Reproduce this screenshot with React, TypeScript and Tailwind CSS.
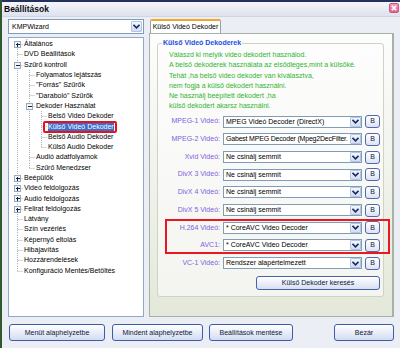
import React from 'react';

type Node = {
  t: string;
  lv: number;
  g: boolean[];
  exp?: '+' | '-';
  last?: boolean;
  first?: boolean;
  sel?: boolean;
};

const tree: Node[] = [
  { t: 'Általános', lv: 0, g: [], exp: '+', first: true },
  { t: 'DVD Beállítások', lv: 0, g: [] },
  { t: 'Szűrő kontroll', lv: 0, g: [], exp: '-' },
  { t: 'Folyamatos lejátszás', lv: 1, g: [true] },
  { t: '"Forrás" Szűrők', lv: 1, g: [true] },
  { t: '"Daraboló" Szűrők', lv: 1, g: [true] },
  { t: 'Dekoder Használat', lv: 1, g: [true], exp: '-' },
  { t: 'Belső Videó Dekoder', lv: 2, g: [true, true] },
  { t: 'Külső Videó Dekoder', lv: 2, g: [true, true], sel: true },
  { t: 'Belső Audio Dekoder', lv: 2, g: [true, true] },
  { t: 'Külső Audió Dekoder', lv: 2, g: [true, true], last: true },
  { t: 'Audió adatfolyamok', lv: 1, g: [true] },
  { t: 'Szűrő Menedzser', lv: 1, g: [true], last: true },
  { t: 'Beépülők', lv: 0, g: [], exp: '+' },
  { t: 'Videó feldolgozás', lv: 0, g: [], exp: '+' },
  { t: 'Audió feldolgozás', lv: 0, g: [], exp: '+' },
  { t: 'Felirat feldolgozás', lv: 0, g: [], exp: '+' },
  { t: 'Látvány', lv: 0, g: [] },
  { t: 'Szín vezérlés', lv: 0, g: [] },
  { t: 'Képernyő eltolás', lv: 0, g: [] },
  { t: 'Hibajavítás', lv: 0, g: [] },
  { t: 'Hozzárendelések', lv: 0, g: [] },
  { t: 'Konfiguráció Mentés/Betöltés', lv: 0, g: [], last: true },
];

const decoders: { label: string; value: string; tight?: boolean }[] = [
  { label: 'MPEG-1 Videó:', value: 'MPEG Videó Decoder (DirectX)' },
  { label: 'MPEG-2 Videó:', value: 'Gabest MPEG Decoder (Mpeg2DecFilter.', tight: true },
  { label: 'Xvid Videó:', value: 'Ne csinálj semmit' },
  { label: 'DivX 3 Videó:', value: 'Ne csinálj semmit' },
  { label: 'DivX 4 Videó:', value: 'Ne csinálj semmit' },
  { label: 'DivX 5 Videó:', value: 'Ne csinálj semmit' },
];

const H = 10.3;

function PassCell({ on }: { on: boolean }) {
  return (
    <svg width={12} height={H} viewBox={`0 0 12 ${H}`} className="shrink-0">
      {on && <line x1={6.5} y1={0} x2={6.5} y2={H} stroke="#b0b0b0" strokeDasharray="1 1" />}
    </svg>
  );
}

function OwnCell({ n }: { n: Node }) {
  const cy = 5.5;
  return (
    <svg width={12} height={H} viewBox={`0 0 12 ${H}`} className="shrink-0">
      <line
        x1={6.5}
        y1={n.first ? cy : 0}
        x2={6.5}
        y2={n.last ? cy : H}
        stroke="#b0b0b0"
        strokeDasharray="1 1"
      />
      <line x1={n.exp ? 9.5 : 6.5} y1={cy} x2={12} y2={cy} stroke="#b0b0b0" strokeDasharray="1 1" />
      {n.exp && (
        <g shapeRendering="crispEdges">
          <rect x={3.5} y={2.5} width={6} height={6} fill="#f4f6fa" stroke="#9aa8bc" />
          <line x1={5} y1={cy} x2={9} y2={cy} stroke="#142448" />
          {n.exp === '+' && <line x1={6.5} y1={4} x2={6.5} y2={8} stroke="#142448" />}
        </g>
      )}
    </svg>
  );
}

function Chevron() {
  return (
    <svg width={7} height={5} viewBox="0 0 7 5">
      <path d="M0.5 0.8 L3.5 3.8 L6.5 0.8" fill="none" stroke="#1b2b5c" strokeWidth={1.6} />
    </svg>
  );
}

function DropBtn() {
  return (
    <div className="flex h-full w-[11px] shrink-0 items-center justify-center rounded-[1px] border border-[#b4c4e6] bg-gradient-to-b from-[#f4f7fe] to-[#d2dcf4]">
      <Chevron />
    </div>
  );
}

function Combo({ value, tight }: { value: string; tight?: boolean }) {
  return (
    <div className="flex h-[12px] w-[139px] shrink-0 items-stretch border border-[#7f9db9] bg-white">
      <span
        className={`flex-1 overflow-hidden whitespace-nowrap pl-[2px] leading-[10px] text-black ${tight ? 'tracking-[-0.2px]' : ''}`}
      >
        {value}
      </span>
      <DropBtn />
    </div>
  );
}

function Btn({ children, w }: { children: React.ReactNode; w: string }) {
  return (
    <button className={`h-[17px] ${w} shrink-0 rounded-[3px] border border-[#3d5ba8] bg-gradient-to-b from-white to-[#d4dcf2] text-[7px] leading-[15px] text-[#0c1a3a]`}>
      {children}
    </button>
  );
}

function DecoderRow({ label, value, tight }: { label: string; value: string; tight?: boolean }) {
  return (
    <div className="flex h-[17.7px] items-center">
      <span className="w-[62px] shrink-0 whitespace-nowrap text-right text-[#7f5fe0]">{label}</span>
      <div className="ml-[3px]">
        <Combo value={value} tight={tight} />
      </div>
      <div className="ml-[3px] flex h-[13px] w-[15px] items-center justify-center rounded-[3px] border border-[#5468a8] bg-gradient-to-b from-white to-[#dce3f4] text-[7px] text-[#10204a]">
        B
      </div>
    </div>
  );
}

export default function App() {
  return (
    <div className="flex h-[348px] w-[400px] flex-col overflow-hidden border-l-2 border-[#2e5a2e] bg-[#eceef5] font-['Liberation_Sans',Arial,sans-serif] text-[7px] text-black">
      {/* Title bar */}
      <div className="flex h-[17px] shrink-0 items-center justify-between border-t-2 border-b border-t-[#23315e] border-b-[#cfd5e3] bg-gradient-to-b from-[#f4f6fb] to-[#dde2ee] pl-[2px] pr-[1px]">
        <span className="text-[8.5px] font-bold leading-none text-[#0a0a14]">Beállítások</span>
        <div className="mb-[2px] flex h-[10px] w-[10px] items-center justify-center rounded-[2px] border border-[#c85880] bg-gradient-to-b from-[#f49ab8] to-[#e0628e]">
          <svg width={6} height={6} viewBox="0 0 6 6">
            <path d="M0.8 0.8 L5.2 5.2 M5.2 0.8 L0.8 5.2" stroke="white" strokeWidth={1.6} />
          </svg>
        </div>
      </div>

      {/* Main */}
      <div className="flex h-[300px] shrink-0 pt-[2px]">
        {/* Left column */}
        <div className="ml-[6px] flex w-[136px] flex-col">
          <div className="flex h-[15px] items-stretch border border-[#7f9db9] bg-white p-[1px]">
            <span className="flex-1 pl-[2px] leading-[11px]">KMPWizard</span>
            <DropBtn />
          </div>
          <div className="mt-[3px] h-[280px] border border-[#8fa8c8] bg-white pl-[2px] pt-[1px]">
            {tree.map((n, i) => (
              <div key={i} className="flex items-center" style={{ height: H }}>
                {n.g.map((on, j) => (
                  <PassCell key={j} on={on} />
                ))}
                <OwnCell n={n} />
                {n.sel ? (
                  <span className="relative ml-[1px] whitespace-nowrap bg-[#3a6cc8] leading-[10px] text-white">
                    {n.t}
                    <span className="absolute -bottom-[1px] -left-[5px] -right-[3px] -top-[1px] rounded-[2px] border-2 border-[#e8101c]" />
                  </span>
                ) : (
                  <span className="ml-[1px] whitespace-nowrap leading-[10px]">{n.t}</span>
                )}
              </div>
            ))}
          </div>
        </div>

        {/* Right column */}
        <div className="ml-[5px] flex w-[245px] flex-col">
          <div className="flex h-[14px] items-end">
            <div className="ml-[1px] flex h-[14px] w-[71px] items-center justify-center rounded-t-[2px] border border-b-0 border-t-2 border-[#9aa4a4] border-t-[#f0a82a] bg-white">
              Külső Videó Dekoder
            </div>
          </div>
          <div className="h-[284px] border border-r-2 border-[#a6b2a4] bg-gradient-to-b from-[#fdfdfe] to-[#e4e8da] pl-[7px] pr-[8px] pt-[4px]">
            <fieldset className="rounded-[3px] border border-[#cfd3c4] bg-gradient-to-b from-[#fdfdfd] to-[#f4f5f0] px-0 pb-[6px] pt-0">
              <legend className="ml-[4px] px-[1px] text-[7px] font-bold leading-[10px] text-[#1b4fe0]">Külső Videó Dekoderek</legend>
              <div className="pl-[11px] pt-[2px] leading-[10.3px] text-[#2fb52f]">
                <div>Válaszd ki melyik video dekodert használod.</div>
                <div>A belső dekoderek használata az elsődleges,mint a külsőké.</div>
                <div>Tehát ,ha belső video dekoder van kiválasztva,</div>
                <div>nem fogja a külső dekodert használni.</div>
                <div>Ne használj beépített dekodert ,ha</div>
                <div>külső dekodert akarsz használni.</div>
              </div>
              <div className="mt-[1px]">
                {decoders.map((d) => (
                  <DecoderRow key={d.label} label={d.label} value={d.value} tight={d.tight} />
                ))}
                <div className="relative">
                  <DecoderRow label="H.264 Videó:" value="* CoreAVC Video Decoder" />
                  <DecoderRow label="AVC1:" value="* CoreAVC Video Decoder" />
                  <div className="absolute -right-[7px] bottom-0 left-[7px] top-0 border-2 border-[#ec1520]" />
                </div>
                <DecoderRow label="VC-1 Videó:" value="Rendszer alapértelmezett" />
              </div>
              <div className="mt-[4px] flex justify-end pr-[3px]">
                <div className="flex h-[14px] w-[124px] items-center justify-center rounded-[3px] border border-[#4862aa] bg-gradient-to-b from-white to-[#d8dff3] text-[#0c1a3a]">
                  Külső Dekoder keresés
                </div>
              </div>
            </fieldset>
          </div>
        </div>
      </div>

      {/* Bottom buttons */}
      <div className="mt-[7px] flex items-center pl-[7px]">
        <Btn w="w-[96px]">Menüt alaphelyzetbe</Btn>
        <div className="ml-[7px]">
          <Btn w="w-[91px]">Mindent alaphelyzetbe</Btn>
        </div>
        <div className="ml-[6px]">
          <Btn w="w-[84px]">Beállítások mentése</Btn>
        </div>
        <div className="ml-[41px]">
          <Btn w="w-[60px]">Bezár</Btn>
        </div>
      </div>
    </div>
  );
}
